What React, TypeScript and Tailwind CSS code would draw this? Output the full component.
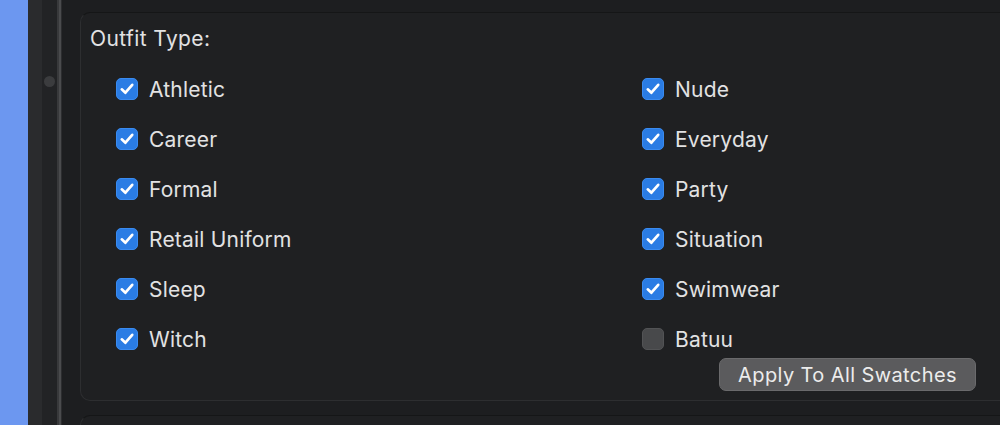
import React from 'react';

const leftItems = [
  { label: 'Athletic', checked: true },
  { label: 'Career', checked: true },
  { label: 'Formal', checked: true },
  { label: 'Retail Uniform', checked: true },
  { label: 'Sleep', checked: true },
  { label: 'Witch', checked: true },
];

const rightItems = [
  { label: 'Nude', checked: true },
  { label: 'Everyday', checked: true },
  { label: 'Party', checked: true },
  { label: 'Situation', checked: true },
  { label: 'Swimwear', checked: true },
  { label: 'Batuu', checked: false },
];

function Checkbox({ label, checked }: { label: string; checked: boolean }) {
  return (
    <div className="h-[50px] flex items-center gap-[11px]">
      {checked ? (
        <div className="w-[22px] h-[22px] rounded-[5px] bg-[#2a7ce4] border border-[#3a8bf0] flex items-center justify-center shrink-0">
          <svg width="16" height="16" viewBox="0 0 15 15" fill="none">
            <path d="M2.6 7.8 L6 11 L12.4 3.6" stroke="white" strokeWidth="2.5" strokeLinecap="round" strokeLinejoin="round" />
          </svg>
        </div>
      ) : (
        <div className="w-[22px] h-[22px] rounded-[5px] bg-[#48494b] border border-[#525355] shrink-0" />
      )}
      <span className="text-[21px] tracking-[0.2px] text-[#e2e2e3] leading-none">{label}</span>
    </div>
  );
}

export default function App() {
  return (
    <div className="w-[1000px] h-[425px] flex overflow-hidden bg-[#1d1e20] font-['Inter','Liberation_Sans',sans-serif]">
      <div className="w-[28px] bg-[#6c97f0] shrink-0" />
      <div className="w-[14px] bg-[#2a2b2d] shrink-0" />
      <div className="w-[15px] bg-[#222325] shrink-0 flex flex-col items-center pt-[76px]">
        <div className="w-[11px] h-[11px] rounded-full bg-[#3b3c3e]" />
      </div>
      <div className="w-[2px] bg-[#38393b] shrink-0" />
      <div className="w-[2px] bg-[#4a4b4d] shrink-0" />
      <div className="w-[1px] bg-[#2c2d2f] shrink-0" />

      <div className="flex-1 pl-[18px] pt-[12px] flex flex-col gap-[14px]">
        <div className="rounded-l-[10px] border border-r-0 border-[#2d2e30] border-t-[#151617] bg-[#1f2022] pl-[9px] pb-[9px]">
          <div className="h-[50px] mt-[1px] flex items-center text-[21px] tracking-[0.4px] text-[#e2e2e3]">Outfit Type:</div>
          <div className="grid grid-cols-[526px_1fr] pl-[26px]">
            <div className="flex flex-col">
              {leftItems.map((it) => (
                <Checkbox key={it.label} label={it.label} checked={it.checked} />
              ))}
            </div>
            <div className="flex flex-col">
              {rightItems.map((it) => (
                <Checkbox key={it.label} label={it.label} checked={it.checked} />
              ))}
            </div>
          </div>
          <div className="flex pl-[629px] -mt-[6px]">
            <button className="h-[33px] w-[257px] rounded-[7px] bg-[#5b5b5d] border border-[#6a6a6c] text-[20px] tracking-[0.4px] text-[#ececec] flex items-center justify-center">
              Apply To All Swatches
            </button>
          </div>
        </div>
        <div className="flex-1 rounded-tl-[10px] border border-r-0 border-b-0 border-[#2d2e30] border-t-[#151617] bg-[#1f2022]" />
      </div>
    </div>
  );
}
